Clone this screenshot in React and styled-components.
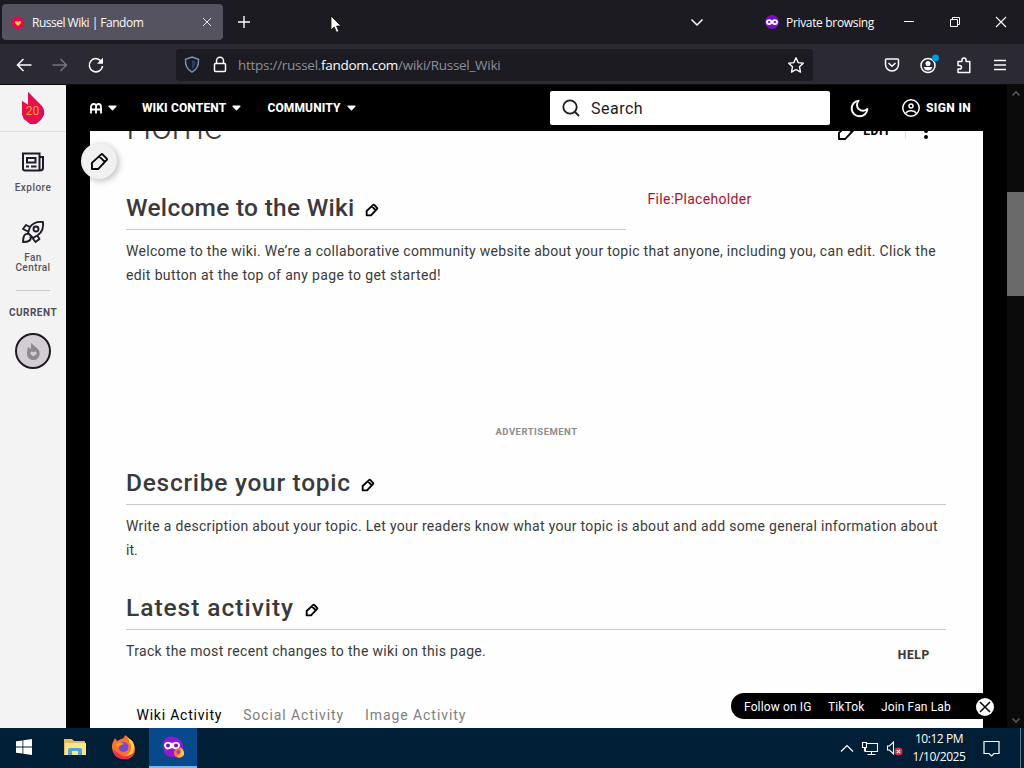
import React from 'react';
import styled, {createGlobalStyle} from 'styled-components';

const GlobalStyle = createGlobalStyle`
	* {
		box-sizing: border-box;
	}

	body {
		margin: 0;
		overflow: hidden;
		font-family: Roboto, "Liberation Sans", sans-serif;
	}
`;

const Desktop = styled.div`
	width: 1024px;
	height: 768px;
	display: flex;
	flex-direction: column;
	overflow: hidden;
	background: #000;
`;

const Icon = styled.svg`
	display: block;
	flex: none;
	fill: none;
	stroke: currentColor;
	stroke-width: ${({$stroke}) => $stroke || 1.5};
	overflow: visible;
`;

/* browser */

const TabStrip = styled.div`
	height: 44px;
	flex: none;
	display: flex;
	align-items: center;
	padding: 0 18px 0 2px;
	background: #1c1b22;
	color: #fbfbfe;
	font: 12px "Open Sans", sans-serif;
`;

const BrowserTab = styled.div`
	width: 221px;
	height: 36px;
	display: flex;
	align-items: center;
	padding: 0 12px 0 9px;
	border-radius: 4px;
	background: #55535f;
`;

const TabTitle = styled.span`
	flex: 1;
	margin-left: 7px;
	letter-spacing: -0.5px;
	white-space: nowrap;
`;

const NewTab = styled.div`
	margin-left: 15px;
`;

const WindowControls = styled.div`
	display: flex;
	align-items: center;
	margin-left: auto;
`;

const PrivateBadge = styled.div`
	display: flex;
	align-items: center;
	gap: 7px;
	margin: 0 30px 0 62px;
	width: 109px;
	white-space: nowrap;
	letter-spacing: -0.33px;

	svg {
		flex: none;
	}
`;

const WindowButtons = styled.div`
	display: flex;
	align-items: center;
	gap: 36px;
`;

const Toolbar = styled.div`
	height: 41px;
	flex: none;
	display: flex;
	align-items: center;
	padding: 1px 18px 0 16px;
	background: #2b2a33;
	border-bottom: 1px solid #0c0c0d;
	color: #fbfbfe;
`;

const NavButtons = styled.div`
	display: flex;
	gap: 20px;
	width: 160px;
`;

const NavButton = styled.span`
	color: ${({$disabled}) => $disabled ? '#75747c' : '#fbfbfe'};
`;

const AddressBar = styled.div`
	width: 637px;
	height: 32px;
	display: flex;
	align-items: center;
	padding: 0 9px 0 8px;
	border-radius: 4px;
	background: #1c1b22;
`;

const ShieldButton = styled.span`
	margin-right: 13px;
	color: #7893b8;
`;

const Url = styled.span`
	flex: 1;
	margin-left: 11px;
	padding-top: 1px;
	color: #8f8f9a;
	font: 13.5px "Open Sans", sans-serif;
	letter-spacing: -0.28px;
	white-space: nowrap;

	b {
		color: #fbfbfe;
		font-weight: 400;
	}
`;

const ToolbarIcons = styled.div`
	display: flex;
	gap: 20px;
	margin-left: auto;

	svg:last-child {
		margin-left: 2px;
	}
`;

const Pointer = styled.svg`
	position: absolute;
	left: 330px;
	top: 15px;
`;

/* page */

const Page = styled.div`
	height: 643px;
	flex: none;
	display: flex;
`;

const Rail = styled.aside`
	width: 66px;
	display: flex;
	flex-direction: column;
	align-items: center;
	background: #f3f3f4;
	color: #1f1a25;
`;

const RailLogo = styled.div`
	width: 66px;
	height: 47px;
	display: flex;
	align-items: center;
	justify-content: center;
	border-bottom: 1px solid #dededf;
`;

const RailItem = styled.div`
	display: flex;
	flex-direction: column;
	align-items: center;
	margin-top: ${({$top}) => $top}px;
`;

const RailLabel = styled.span`
	margin-top: ${({$top}) => $top}px;
	color: #56535b;
	font-size: 10px;
	line-height: 10px;
	font-weight: 500;
	letter-spacing: 0.45px;
	text-align: center;
`;

const RailDivider = styled.div`
	width: 34px;
	height: 1px;
	margin-top: 17px;
	background: #c9c8cb;
`;

const RailHeading = styled.span`
	margin-top: 16px;
	color: #4f4c55;
	font-size: 10px;
	line-height: 12px;
	font-weight: 700;
	letter-spacing: 0.5px;
`;

const WikiBadge = styled.div`
	width: 36px;
	height: 36px;
	display: flex;
	align-items: center;
	justify-content: center;
	margin-top: 14px;
	border: 2px solid #1f1a25;
	border-radius: 50%;
	background: #d5cdd4;
	color: #8e888f;
`;

const Wiki = styled.main`
	position: relative;
	width: 941px;
	display: flex;
	flex-direction: column;
	background: #000;
`;

const WikiHeader = styled.header`
	height: 46px;
	flex: none;
	display: flex;
	align-items: center;
	padding: 0 36px 0 24px;
	color: #fff;
`;

const MenuItem = styled.div`
	display: flex;
	align-items: center;
	gap: 6px;
	margin-right: ${({$right}) => $right}px;
	font-size: 12px;
	line-height: 14px;
	font-weight: 800;
	letter-spacing: 0.14px;
	white-space: nowrap;
`;

const SearchBox = styled.div`
	width: 280px;
	height: 34px;
	display: flex;
	align-items: center;
	gap: 11px;
	margin-left: auto;
	padding-left: 12px;
	border-radius: 2px;
	background: #fff;
	color: #1c1b20;
	font-size: 16px;
	letter-spacing: 0.5px;
`;

const ThemeToggle = styled.div`
	margin: 0 32px 0 19px;
`;

const SignIn = styled.div`
	display: flex;
	align-items: center;
	gap: 6px;
	width: 69px;
	font-size: 12px;
	font-weight: 800;
	letter-spacing: 0.35px;
	white-space: nowrap;
`;

const Article = styled.article`
	width: 893px;
	flex: 1;
	min-height: 0;
	margin-left: 24px;
	padding: 0 37px 0 36px;
	overflow: hidden;
	background: #fefefe;
	color: #3a3a3a;
`;

const TitleRow = styled.div`
	height: 36px;
	display: flex;
	align-items: center;
	margin-top: -22px;
	padding-right: 18px;
	color: #000;
`;

const PageTitle = styled.h1`
	flex: 1;
	margin: 0;
	color: #3a3a3a;
	font-size: 36px;
	line-height: 36px;
	font-weight: 300;
	letter-spacing: 0.1px;
`;

const EditButton = styled.div`
	display: flex;
	align-items: center;
	gap: 8px;
	margin: 8px 14px 0 0;
	font-size: 12px;
	font-weight: 800;
	letter-spacing: 0.6px;
`;

const MoreButton = styled.div`
	height: 14px;
	display: flex;
	align-items: center;
	margin-top: 8px;
	padding-left: 18px;
	border-left: 1px solid #ddd;
`;

const Intro = styled.div`
	display: flex;
	gap: 21.5px;
	margin-top: 44px;
`;

const SectionHeading = styled.h2`
	width: ${({$width}) => $width || '100%'};
	height: 41px;
	display: flex;
	align-items: center;
	gap: 11.5px;
	margin: ${({$top}) => $top || 0}px 0 9px;
	padding-bottom: 3px;
	border-bottom: 1px solid #c5c9c8;
	font-size: 24.5px;
	font-weight: 500;
	letter-spacing: ${({$spacing}) => $spacing || 0}px;

	svg {
		margin-top: 5px;
		color: #000;
	}
`;

const FileLink = styled.a`
	color: #a5122f;
	font-size: 14px;
	line-height: 20px;
	letter-spacing: 0.3px;
`;

const Line = styled.div`
	font-size: 14px;
	line-height: 24px;
	letter-spacing: ${({$spacing}) => $spacing || 0}px;
	white-space: nowrap;
`;

const Advertisement = styled.div`
	margin: 138px 0 0 1px;
	color: #8c8c8c;
	font-size: 9.5px;
	line-height: 14px;
	font-weight: 700;
	letter-spacing: 0.48px;
	text-align: center;
`;

const ActivityRow = styled.div`
	display: flex;
	justify-content: space-between;
	padding-right: 16px;
`;

const Help = styled.span`
	margin-top: 4px;
	font-size: 12px;
	line-height: 24px;
	font-weight: 800;
	letter-spacing: 0.7px;
`;

const Tabs = styled.nav`
	display: flex;
	gap: 21px;
	margin: 36px 0 0 10.5px;
	font-size: 14px;
	line-height: 24px;
	white-space: nowrap;
`;

const Tab = styled.span`
	color: ${({$active}) => $active ? '#000' : '#808080'};
	letter-spacing: ${({$spacing}) => $spacing || 0}px;
`;

const FloatingEdit = styled.div`
	position: absolute;
	left: 15px;
	top: 58px;
	width: 36px;
	height: 36px;
	display: flex;
	align-items: center;
	justify-content: center;
	border-radius: 50%;
	background: #f0f0f0;
	box-shadow: 2px 2px 6px rgba(0, 0, 0, 0.25);
	color: #000;
`;

const SocialBar = styled.div`
	position: absolute;
	left: 665px;
	top: 608px;
	width: 263px;
	height: 26px;
	display: flex;
	align-items: center;
	gap: 16.5px;
	padding: 1px 0 0 13px;
	border-radius: 13px;
	background: #000;
	color: #fff;
	font-size: 12px;
	letter-spacing: 0.13px;
	white-space: nowrap;
`;

const CloseBar = styled.span`
	width: 18px;
	height: 18px;
	display: flex;
	align-items: center;
	justify-content: center;
	margin-left: auto;
	border-radius: 50%;
	background: #fff;
	color: #000;
`;

const ScrollBar = styled.div`
	width: 17px;
	display: flex;
	flex-direction: column;
	align-items: center;
	padding: 6px 0 5px;
	background: #0b0b0b;
	color: #54545a;
`;

const ScrollThumb = styled.div`
	width: 17px;
	height: 104px;
	margin: 96px 0 auto;
	background: #696969;
`;

/* taskbar */

const TaskBar = styled.footer`
	height: 40px;
	flex: none;
	display: flex;
	padding-right: 3px;
	background: #001e36;
	color: #fff;
`;

const TaskButton = styled.div`
	width: ${({$width}) => $width || 49}px;
	display: flex;
	align-items: center;
	justify-content: center;
	background: ${({$active}) => $active ? '#07498a' : 'none'};
	border-bottom: 2px solid ${({$active}) => $active ? '#76b9ed' : 'transparent'};
`;

const Tray = styled.div`
	display: flex;
	align-items: center;
	gap: 9px;
	margin-left: auto;
	padding-right: 20px;
	border-right: 1px solid #66788a;
`;

const Clock = styled.div`
	width: 54px;
	margin-right: 8px;
	font: 12px "Open Sans", sans-serif;
	line-height: 18px;
	letter-spacing: -0.45px;
	text-align: center;
	white-space: nowrap;
`;

const Cross = ({size = 10, stroke = 1.1}) => (
	<Icon width={size} height={size} viewBox="0 0 10 10" $stroke={stroke}>
		<path d="M0 0l10 10M10 0L0 10"/>
	</Icon>
);

const Caret = () => (
	<svg width="9" height="6" viewBox="0 0 9 6">
		<path d="M1 .5h7q1 .3.4 1L5 5.2q-.5.5-1 0L.5 1.5Q0 .8 1 .5z" fill="currentColor"/>
	</svg>
);

const Pencil = ({size = 12, stroke = 2}) => (
	<Icon width={size} height={size} viewBox="0 0 18 18" $stroke={stroke} strokeLinejoin="round">
		<path d="M1 17v-6.5L10.8 1.4q.7-.7 1.4 0l4.5 4.5q.7.7 0 1.4L7.5 17zM8.8 3.6l5.8 5.8"/>
	</Icon>
);

const Mask = () => (
	<svg width="14" height="14" viewBox="0 0 14 14">
		<circle cx="7" cy="7" r="7" fill="#7411c4"/>
		<path d="M1 7c0-3.2 4.2-3.3 6-1.6C8.8 3.700 13 3.800 13 7c0 3.400-3.900 3.800-6 1.400C4.900 10.800 1 10.400 1 7z" fill="#fff"/>
		<ellipse cx="4.1" cy="7" rx="1.400" ry="1" fill="#7411c4"/>
		<ellipse cx="9.9" cy="7" rx="1.400" ry="1" fill="#7411c4"/>
	</svg>
);

const BrowserChrome = () => (
	<>
		<TabStrip>
			<BrowserTab>
				<svg width="14" height="15" viewBox="0 0 14 15">
					<path d="M4 1q0 2 1 2l2-3 5 4.5q3 4.5-.5 7.5L7 15l-4.5-3Q0 10 1 6q1-3 3-5z" fill="#e30a48"/>
					<path d="M7 11L4 8q-.5-2 1.3-2Q6.5 6 7 7q.5-1 1.7-1Q10.5 6 10 8z" fill="#ffc453"/>
				</svg>
				<TabTitle>Russel Wiki | Fandom</TabTitle>
				<Cross size={8}/>
			</BrowserTab>
			<NewTab>
				<Icon width="12" height="12" viewBox="0 0 12 12" $stroke={1.4}><path d="M6 0v12M0 6h12"/></Icon>
			</NewTab>
			<WindowControls>
				<Icon width="12" height="7" viewBox="0 0 12 7"><path d="M.5.5L6 6l5.5-5.5"/></Icon>
				<PrivateBadge><Mask/>Private browsing</PrivateBadge>
				<WindowButtons>
					<Icon width="10" height="10" viewBox="0 0 10 10" $stroke={1}><path d="M0 4.5h10"/></Icon>
					<Icon width="10" height="10" viewBox="0 0 10 10" $stroke={1}>
						<path d="M.5 2.5h7v7h-7zM2.5 2.5v-2h7v7h-2"/>
					</Icon>
					<Cross/>
				</WindowButtons>
			</WindowControls>
		</TabStrip>
		<Pointer width="12" height="19" viewBox="0 0 12 19">
			<path d="M1 1v14l3.2-3 2.3 5.3 2.3-1L6.6 11H11z" fill="#fff" stroke="#111" strokeWidth=".8"/>
		</Pointer>
		<Toolbar>
			<NavButtons>
				<NavButton>
					<Icon width="16" height="16" viewBox="0 0 16 16"><path d="M15.5 8H1.5M7.5 2l-6 6 6 6"/></Icon>
				</NavButton>
				<NavButton $disabled>
					<Icon width="16" height="16" viewBox="0 0 16 16"><path d="M.5 8h14M8.5 2l6 6-6 6"/></Icon>
				</NavButton>
				<NavButton>
					<Icon width="16" height="16" viewBox="0 0 16 16">
						<path d="M13.7 5A6.6 6.6 0 1 0 14.5 9"/>
						<path d="M15 .8v6H9z" fill="currentColor" stroke="none"/>
					</Icon>
				</NavButton>
			</NavButtons>
			<AddressBar>
				<ShieldButton>
					<Icon width="16" height="17" viewBox="0 0 16 17" $stroke={1.4}>
						<path d="M8 1l6.500 2.300q.7 9-6.500 12.900Q.8 12.300 1.500 3.300z"/>
						<path d="M8 4.200v9q3.700-3 3.700-7.800z" fill="#263e60" stroke="none"/>
					</Icon>
				</ShieldButton>
				<Icon width="14" height="17" viewBox="0 0 14 17">
					<rect x="1.5" y="7.5" width="11" height="8" rx="1"/>
					<path d="M3.5 7.5V4.7a3.5 3.5 0 0 1 7 0v2.8"/>
				</Icon>
				<Url>https://russel.<b>fandom.com</b>/wiki/Russel_Wiki</Url>
				<Icon width="16" height="16" viewBox="0 0 16 16" $stroke={1.4} strokeLinejoin="round">
					<path d="M8 .8l2.2 4.8 5.1.6-3.8 3.6 1 5.3L8 12.5l-4.5 2.6 1-5.3L.7 6.2l5.1-.6z"/>
				</Icon>
			</AddressBar>
			<ToolbarIcons>
				<Icon width="16" height="16" viewBox="0 0 16 16">
					<path d="M2.500 2h11q1 0 1 1v4.500a6.500 6.500 0 0 1-13 0V3q0-1 1-1zM4.500 6L8 9.300 11.500 6"/>
				</Icon>
				<Icon width="16" height="16" viewBox="0 0 16 16">
					<circle cx="8" cy="8.5" r="7"/>
					<circle cx="8" cy="6.5" r="2.5" fill="currentColor" stroke="none"/>
					<path d="M3.7 10h8.600q-1 3.500-4.300 3.500T3.700 10z" fill="currentColor" stroke="none"/>
					<circle cx="15.5" cy="1" r="3.5" fill="#0098dc" stroke="none"/>
				</Icon>
				<Icon width="16" height="16" viewBox="0 0 16 16" strokeLinejoin="round">
					<path d="M2 8V4.500h4V3a2 2 0 0 1 4 0v1.500h3.800v11H2V12h1.700a1.800 1.800 0 0 0 0-3.600H2z"/>
				</Icon>
				<Icon width="12" height="16" viewBox="0 0 12 16" $stroke={1.3}>
					<path d="M0 3.500h12M0 8h12M0 12.500h12"/>
				</Icon>
			</ToolbarIcons>
		</Toolbar>
	</>
);

const SideRail = () => (
	<Rail>
		<RailLogo>
			<svg width="24" height="32" viewBox="0 0 24 32">
				<path d="M1 9l6 4V0l14 14q3 4 2 9l-3 5-5 4H9l-6-5-2-5z" fill="#b81872"/>
				<path d="M1 9l6 4V0l13 14q2 4 1 9l-3 5-5 3H9l-6-4-2-5z" fill="#e6104f"/>
				<text x="11.5" y="23" textAnchor="middle" fill="#ff9d2c" fontSize="12" fontFamily="Roboto, sans-serif">20</text>
			</svg>
		</RailLogo>
		<RailItem $top={20}>
			<Icon width="22" height="20" viewBox="0 0 22 20" $stroke={2}>
				<path d="M1 1.500h16.500V18.500H3q-2 0-2-2zM17.500 5H21v11q0 2.500-3.500 2.500"/>
				<path d="M5 6h8.500v4.500H5zM4 14.500h3M9 14.500h5.500"/>
			</Icon>
			<RailLabel $top={11}>Explore</RailLabel>
		</RailItem>
		<RailItem $top={27}>
			<Icon width="24" height="24" viewBox="0 0 24 24" $stroke={1.9} strokeLinejoin="round">
				<path d="M22 2q-9-1-13 5l-2 6 5 5 5-3q6-4 5-13zM9 7L5 5 2 9l5 2.500M16.500 16l2 3-4 3-3-4M7 14q-5-1-5 8 9 0 7.500-5.500"/>
				<circle cx="15" cy="9" r="2.5"/>
			</Icon>
			<RailLabel $top={9}>Fan<br/>Central</RailLabel>
		</RailItem>
		<RailDivider/>
		<RailHeading>CURRENT</RailHeading>
		<WikiBadge>
			<svg width="13" height="17" viewBox="0 0 13 17">
				<path d="M1 4l3 2V0l7 6q2.500 3 1.500 6-1 4-4.500 5H5q-4-1-5-5-.3-3 1-8z" fill="currentColor"/>
				<path d="M6.500 13.500L3.500 11q-.8-2 1-2.500 1.500 0 2 1 .5-1 2-1 1.800.5 1 2.500z" fill="#d5cdd4"/>
			</svg>
		</WikiBadge>
	</Rail>
);

const WikiMenu = () => (
	<WikiHeader>
		<MenuItem $right={25}>
			<Icon width="12" height="11" viewBox="0 0 12 11" $stroke={1.8}>
				<path d="M1 10.500V4q0-3 2.700-3T6 3.500v7M6 4q0-3 2.500-3T11 4v6.500M0 6.500h12"/>
			</Icon>
			<Caret/>
		</MenuItem>
		<MenuItem $right={26}>WIKI CONTENT <Caret/></MenuItem>
		<MenuItem $right={0}>COMMUNITY <Caret/></MenuItem>
		<SearchBox>
			<Icon width="18" height="18" viewBox="0 0 18 18" $stroke={1.8}>
				<circle cx="8" cy="8" r="6.7"/>
				<path d="M12.500 12.500l4.500 4.500"/>
			</Icon>
			Search
		</SearchBox>
		<ThemeToggle>
			<Icon width="21" height="21" viewBox="0 0 24 24" $stroke={2.2} strokeLinejoin="round">
				<path d="M11 3a6.500 6.500 0 0 0 10 9.500A9 9 0 1 1 11 3z"/>
			</Icon>
		</ThemeToggle>
		<SignIn>
			<Icon width="18" height="18" viewBox="0 0 18 18" $stroke={1.5}>
				<circle cx="9" cy="9" r="8.2"/>
				<circle cx="9" cy="7" r="2"/>
				<path d="M3.600 14.500q1.500-2.700 5.400-2.700t5.400 2.700"/>
			</Icon>
			SIGN IN
		</SignIn>
	</WikiHeader>
);

const WikiArticle = () => (
	<Article>
		<TitleRow>
			<PageTitle>Home</PageTitle>
			<EditButton><Pencil size={17}/>EDIT</EditButton>
			<MoreButton>
				<svg width="4" height="16" viewBox="0 0 4 16">
					<circle cx="2" cy="2" r="2"/>
					<circle cx="2" cy="8" r="2"/>
					<circle cx="2" cy="14" r="2"/>
				</svg>
			</MoreButton>
		</TitleRow>
		<Intro>
			<SectionHeading $width="500px" $spacing={0.27}>Welcome to the Wiki <Pencil stroke={2.8}/></SectionHeading>
			<FileLink>File:Placeholder</FileLink>
		</Intro>
		<Line $spacing={0.31}>Welcome to the wiki. We’re a collaborative community website about your topic that anyone, including you, can edit. Click the</Line>
		<Line $spacing={0.37}>edit button at the top of any page to get started!</Line>
		<Advertisement>ADVERTISEMENT</Advertisement>
		<SectionHeading $top={25} $spacing={0.72}>Describe your topic <Pencil stroke={2.8}/></SectionHeading>
		<Line $spacing={0.31}>Write a description about your topic. Let your readers know what your topic is about and add some general information about</Line>
		<Line>it.</Line>
		<SectionHeading $top={27} $spacing={0.97}>Latest activity <Pencil stroke={2.8}/></SectionHeading>
		<ActivityRow>
			<Line $spacing={0.32}>Track the most recent changes to the wiki on this page.</Line>
			<Help>HELP</Help>
		</ActivityRow>
		<Tabs>
			<Tab $active $spacing={0.77}>Wiki Activity</Tab>
			<Tab $spacing={0.9}>Social Activity</Tab>
			<Tab $spacing={0.93}>Image Activity</Tab>
		</Tabs>
	</Article>
);

const WindowsTaskBar = () => (
	<TaskBar>
		<TaskButton $width={48}>
			<svg width="16" height="16" viewBox="0 0 16 16" fill="#fff">
				<path d="M0 2.300L6.500 1.400v6.200H0zM7.300 1.300L16 0v7.600H7.300zM0 8.400h6.500v6.200L0 13.700zM7.300 8.400H16V16l-8.700-1.300z"/>
			</svg>
		</TaskButton>
		<TaskButton $width={53}>
			<svg width="22" height="18" viewBox="0 0 22 18">
				<path d="M0 1h8l2 2h11v14H0z" fill="#e9bd55"/>
				<path d="M1 5h21v12H1z" fill="#ffe490"/>
				<path d="M4 17v-5q0-2 2-2h10q2 0 2 2v5h-4v-4H8v4z" fill="#4ba7d4"/>
			</svg>
		</TaskButton>
		<TaskButton $width={45}>
			<svg width="23" height="24" viewBox="0 0 23 24">
				<path d="M1 7l2-4 2 3 4-2q3 0 4-4 5 3 5 6 5 3 5 8 0 10-11 10Q1 23 0 13q-.2-4 1-6z" fill="#ff712b"/>
				<path d="M13 1q5 3 4 7 4 2 1 9-3 5-9 4 12 2 13-8Q23 6 16 3z" fill="#ffd347"/>
				<path d="M1 14q2 10 11 10 8 0 10-6-8 6-15 1z" fill="#ef2e50"/>
				<circle cx="11.5" cy="12" r="5" fill="#7949c8"/>
				<path d="M4 9q4-3 8 0-5 1-6 4z" fill="#ff9b31"/>
			</svg>
		</TaskButton>
		<TaskButton $width={3}/>
		<TaskButton $width={48} $active>
			<svg width="22" height="22" viewBox="0 0 22 22">
				<path d="M3 3q4-4 9-2 8 1 9 9 0 11-10 11Q1 21 1 11q-1-5 2-8z" fill="#9218d4"/>
				<path d="M2 9q1-5 8-2 7-3 8 2-1 7-8 3-7 4-8-3z" fill="#fff"/>
				<circle cx="6" cy="9.5" r="2" fill="#7416b5"/>
				<circle cx="14" cy="9.5" r="2" fill="#7416b5"/>
				<circle cx="17" cy="17" r="5" fill="#ff7338"/>
				<path d="M18 11q5 3 4 8-4 4-7 1 5-1 3-9z" fill="#ffc447"/>
				<circle cx="16.5" cy="16" r="2" fill="#a13dbb"/>
			</svg>
		</TaskButton>
		<Tray>
			<Icon width="12" height="7" viewBox="0 0 12 7" $stroke={1.2}><path d="M0 6.500l6-6 6 6"/></Icon>
			<Icon width="16" height="15" viewBox="0 0 16 15" $stroke={1.1}>
				<path d="M4.500 2.500h11v8h-12V7M.5 1.500h4v5h-4zM2.500 6.500v4M9.500 10.500v3M5.500 13.500h8"/>
			</Icon>
			<Icon width="16" height="15" viewBox="0 0 16 15" $stroke={1.1}>
				<path d="M.5 5h2l4-4v12l-4-4h-2z"/>
				<circle cx="11.5" cy="10.5" r="4" fill="#d82c48" stroke="none"/>
				<path d="M9.800 8.800l3.400 3.400M13.200 8.800l-3.400 3.400"/>
			</Icon>
			<Clock>10:12 PM<br/>1/10/2025</Clock>
			<Icon width="17" height="17" viewBox="0 0 17 17" $stroke={1.2}>
				<path d="M1 1.500h15v12h-5L8.500 16 6 13.500H1z"/>
			</Icon>
		</Tray>
	</TaskBar>
);

const App = () => (
	<Desktop>
		<GlobalStyle/>
		<BrowserChrome/>
		<Page>
			<SideRail/>
			<Wiki>
				<WikiMenu/>
				<WikiArticle/>
				<FloatingEdit><Pencil size={17}/></FloatingEdit>
				<SocialBar>
					<span>Follow on IG</span>
					<span>TikTok</span>
					<span>Join Fan Lab</span>
					<CloseBar><Cross stroke={1.5}/></CloseBar>
				</SocialBar>
			</Wiki>
			<ScrollBar>
				<Icon width="8" height="5" viewBox="0 0 8 5" $stroke={1.7}><path d="M.5 4.500L4 1l3.500 3.500"/></Icon>
				<ScrollThumb/>
				<Icon width="8" height="5" viewBox="0 0 8 5" $stroke={1.7}><path d="M.5.5L4 4 7.500.5"/></Icon>
			</ScrollBar>
		</Page>
		<WindowsTaskBar/>
	</Desktop>
);

export default App;
